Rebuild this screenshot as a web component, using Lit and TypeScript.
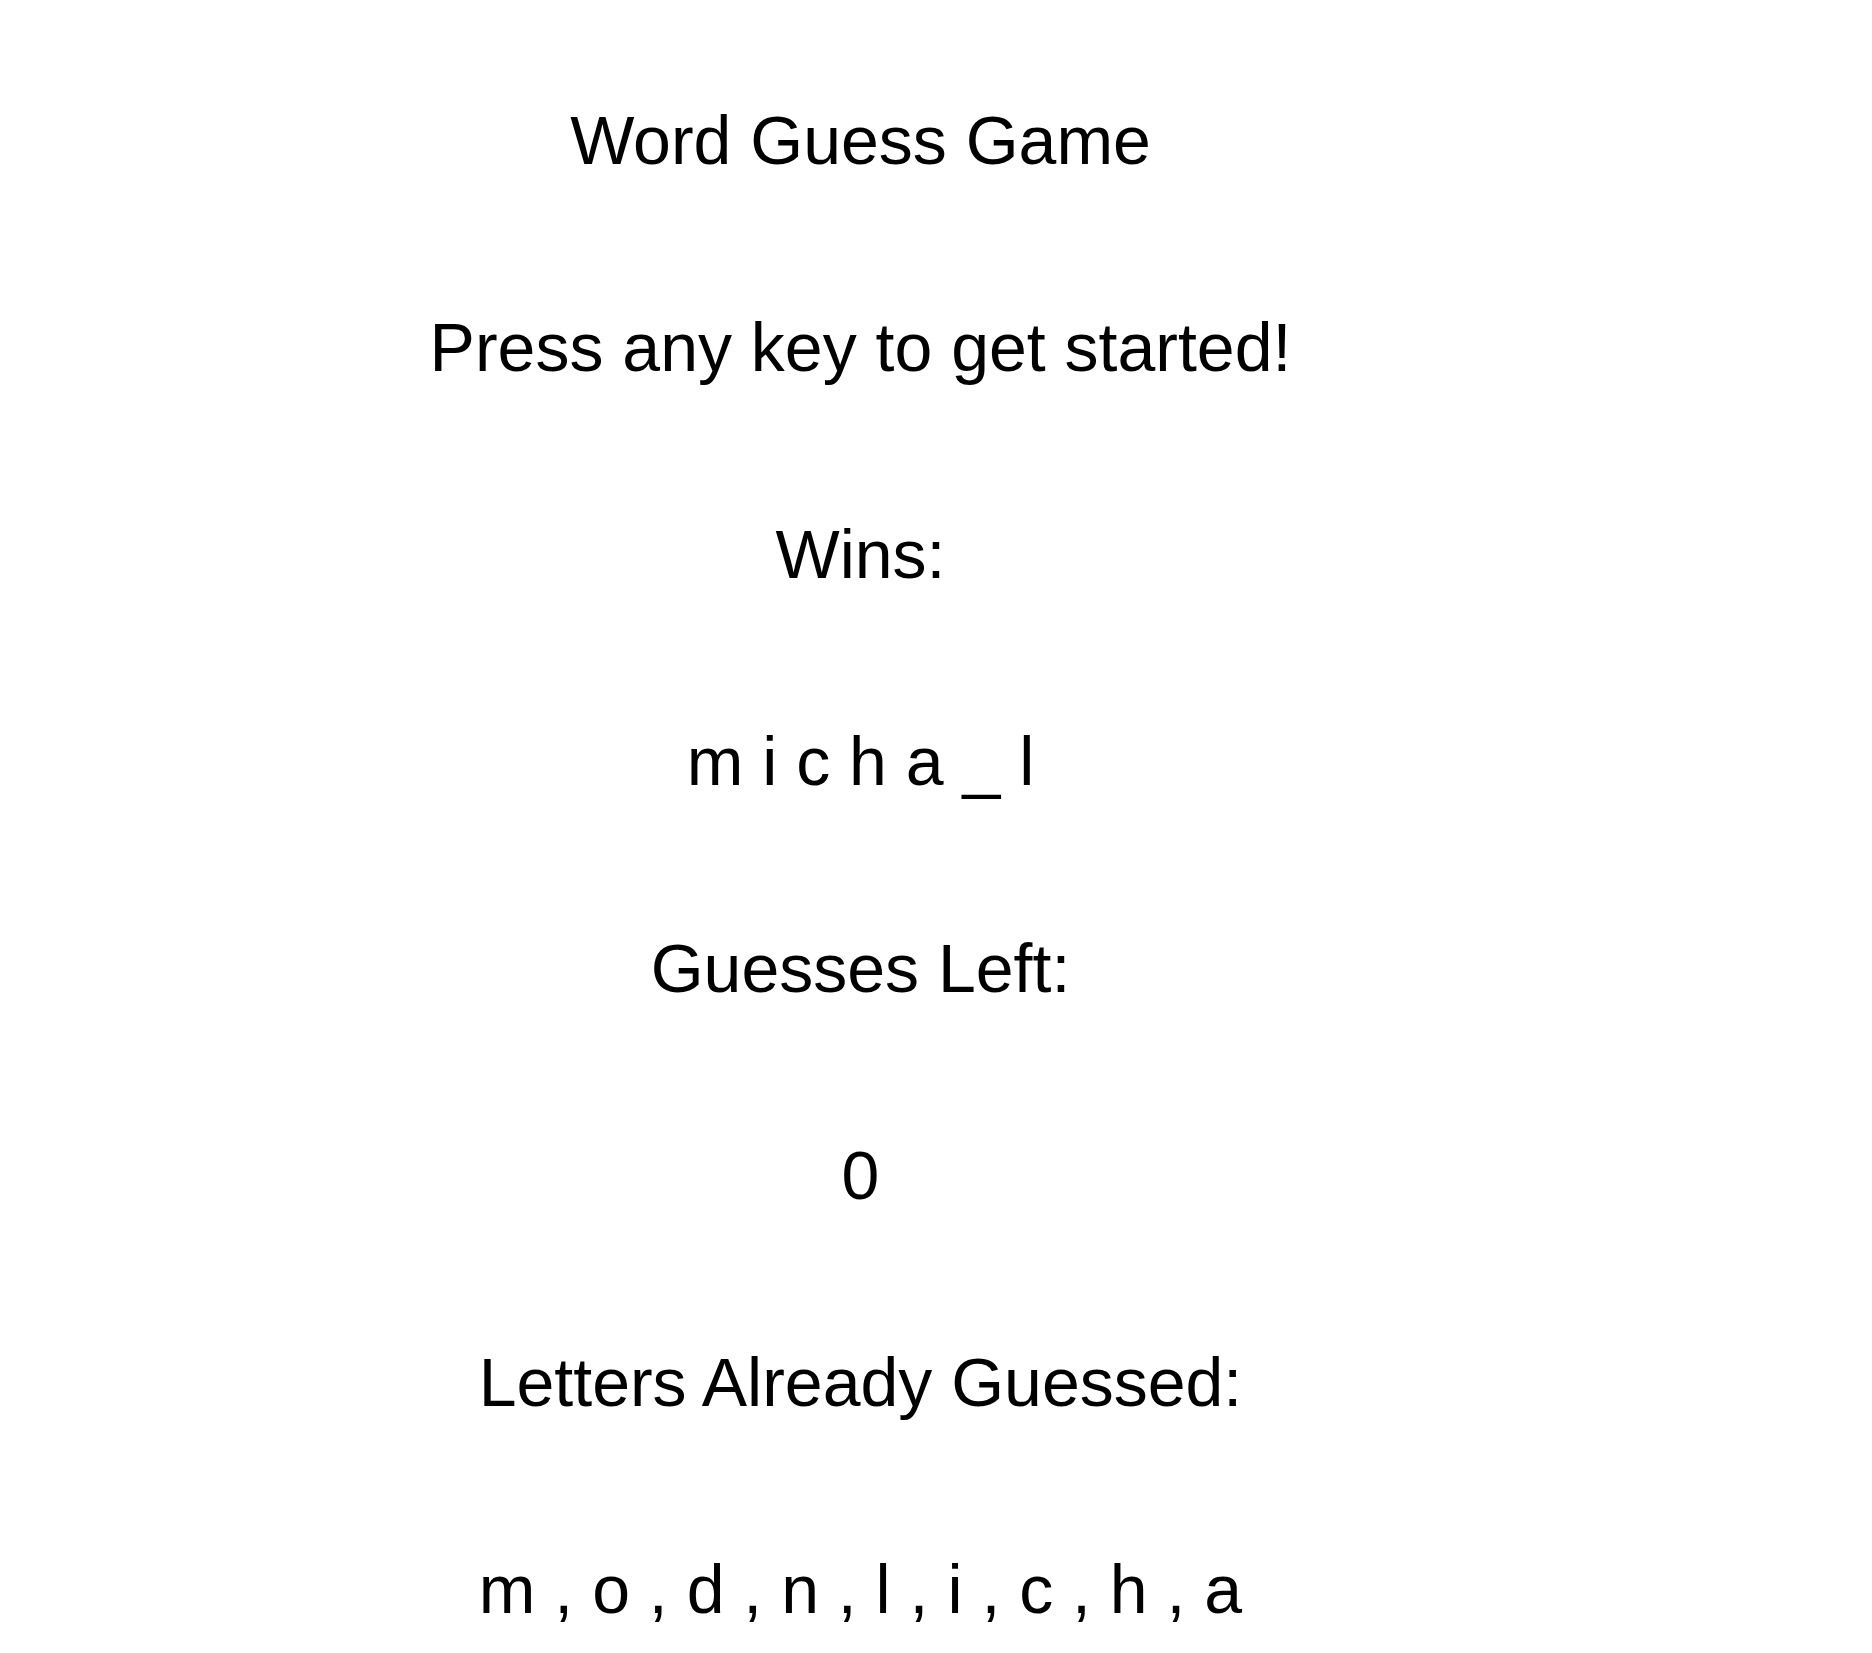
import { LitElement, html, css } from "lit";
import { customElement, state } from "lit/decorators.js";

@customElement("app-root")
export class AppRoot extends LitElement {
  static styles = css`
    :host {
      display: block;
      background: #fff;
      color: #000;
      font-family: "Liberation Sans", Arial, sans-serif;
      font-size: 68px;
      line-height: 79px;
    }
    .game {
      display: flex;
      flex-direction: column;
      gap: 128px;
      padding: 101px 151px 0 0;
      text-align: center;
    }
    .line {
      margin: 0;
      font-size: inherit;
      font-weight: 400;
    }
  `;

  @state() private word = ["m", "i", "c", "h", "a", "_", "l"];
  @state() private guessesLeft = 0;
  @state() private guessed = ["m", "o", "d", "n", "l", "i", "c", "h", "a"];

  render() {
    return html`
      <main class="game">
        <h1 class="line">Word Guess Game</h1>
        <p class="line">Press any key to get started!</p>
        <p class="line">Wins:</p>
        <p class="line">${this.word.join(" ")}</p>
        <p class="line">Guesses Left:</p>
        <p class="line">${this.guessesLeft}</p>
        <p class="line">Letters Already Guessed:</p>
        <p class="line">${this.guessed.join(" , ")}</p>
      </main>
    `;
  }
}
